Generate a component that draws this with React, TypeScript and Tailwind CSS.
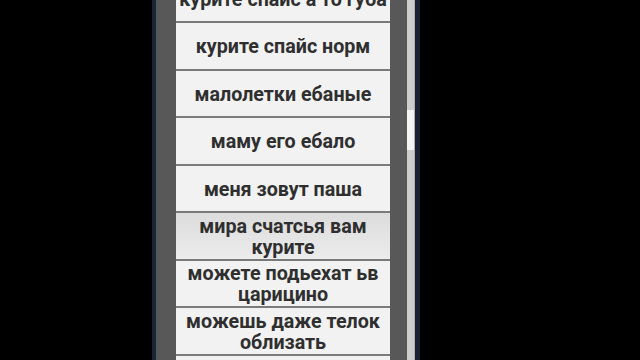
const items: { lines: string[]; pressed?: boolean }[] = [
  { lines: ["курите спайс а то губа"] },
  { lines: ["курите спайс норм"] },
  { lines: ["малолетки ебаные"] },
  { lines: ["маму его ебало"] },
  { lines: ["меня зовут паша"] },
  { lines: ["мира счатсья вам", "курите"], pressed: true },
  { lines: ["можете подьехат ьв", "царицино"] },
  { lines: ["можешь даже телок", "облизать"] },
  { lines: [""] },
];

function PhraseButton({ lines, pressed }: { lines: string[]; pressed?: boolean }) {
  return (
    <button
      className={
        "w-full h-[47.5px] shrink-0 border-b-2 border-[#7a7a7a] pt-[2px] flex flex-col items-center justify-center text-[19.7px] leading-[21px] font-bold text-[#2f2f2f] " +
        (pressed ? "bg-gradient-to-b from-[#dcdcdc] to-[#ececec]" : "bg-[#f2f2f2]")
      }
    >
      {lines.map((l, i) => (
        <span key={i} className="whitespace-nowrap">
          {l}
        </span>
      ))}
    </button>
  );
}

export default function App() {
  return (
    <div
      className="w-[640px] h-[360px] bg-black flex overflow-hidden"
      style={{ fontFamily: "Roboto, 'Noto Sans', sans-serif" }}
    >
      <div className="w-[152px] shrink-0" />
      <div className="w-[4px] shrink-0 bg-[#1c2337]" />
      <div className="w-[251px] shrink-0 bg-[#585858] flex pl-[20px] pr-[17px]">
        <div className="flex-1 flex flex-col -mt-[24.5px]">
          {items.map((it, i) => (
            <PhraseButton key={i} lines={it.lines} pressed={it.pressed} />
          ))}
        </div>
      </div>
      <div className="w-[8px] shrink-0 bg-[#cdcdcd] flex flex-col border-r border-[#b0b0b0]">
        <div className="h-[110px] shrink-0" />
        <div className="h-[40px] shrink-0 bg-[#f4f4f4]" />
      </div>
      <div className="w-[5px] shrink-0 bg-[#1a2033]" />
      <div className="flex-1" />
    </div>
  );
}
